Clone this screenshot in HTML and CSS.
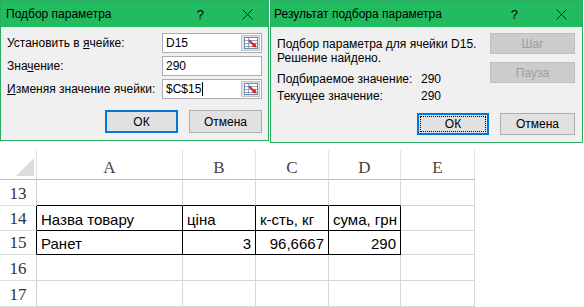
FILE: index.html
```html
<!DOCTYPE html>
<html lang="ru">
<head>
  <meta charset="UTF-8">
  <meta name="viewport" content="width=device-width, initial-scale=1.0">
  <title>Подбор параметра</title>
  <link rel="stylesheet" href="styles.css">
</head>
<body>
  <div class="dialogs">
    <div class="dialog goal">
      <div class="titlebar">
        <span class="title">Подбор параметра</span>
        <span class="help">?</span>
        <svg class="close" width="11" height="11" viewBox="0 0 11 11"><path d="M0.5 0.5L10.5 10.5M10.5 0.5L0.5 10.5" stroke="#222" stroke-width="1"/></svg>
      </div>
      <div class="body">
        <div class="field">
          <label>Установить в <u>я</u>чейке:</label>
          <div class="input"><span>D15</span>
            <span class="ref"><svg width="14" height="12" viewBox="0 0 14 12"><rect x="0.5" y="0.5" width="13" height="11" fill="#fff" stroke="#6d8db3"/><path d="M1 3.5h12M1 6.5h12M1 9.5h12M4.5 1v10" stroke="#8aa6c8"/><polygon points="12.5,10.5 7.7,9.6 8.8,8.4 4.3,3.9 5.7,2.5 10.2,7 11.4,5.8" fill="#d8261b"/></svg></span>
          </div>
        </div>
        <div class="field">
          <label>Зна<u>ч</u>ение:</label>
          <div class="input"><span>290</span></div>
        </div>
        <div class="field">
          <label><u>И</u>зменяя значение ячейки:</label>
          <div class="input"><span>$C$15<i class="caret"></i></span>
            <span class="ref"><svg width="14" height="12" viewBox="0 0 14 12"><rect x="0.5" y="0.5" width="13" height="11" fill="#fff" stroke="#6d8db3"/><path d="M1 3.5h12M1 6.5h12M1 9.5h12M4.5 1v10" stroke="#8aa6c8"/><polygon points="12.5,10.5 7.7,9.6 8.8,8.4 4.3,3.9 5.7,2.5 10.2,7 11.4,5.8" fill="#d8261b"/></svg></span>
          </div>
        </div>
        <div class="buttons">
          <button class="btn default">ОК</button>
          <button class="btn">Отмена</button>
        </div>
      </div>
    </div>

    <div class="dialog result">
      <div class="titlebar">
        <span class="title">Результат подбора параметра</span>
        <span class="help">?</span>
        <svg class="close" width="11" height="11" viewBox="0 0 11 11"><path d="M0.5 0.5L10.5 10.5M10.5 0.5L0.5 10.5" stroke="#222" stroke-width="1"/></svg>
      </div>
      <div class="body">
        <div class="result-main">
          <div class="msg">
            <p>Подбор параметра для ячейки D15.</p>
            <p>Решение найдено.</p>
            <div class="values">
              <span>Подбираемое значение:</span><span>290</span>
              <span>Текущее значение:</span><span>290</span>
            </div>
          </div>
          <div class="side">
            <button class="btn off">Шаг</button>
            <button class="btn off">Пауза</button>
          </div>
        </div>
        <div class="buttons">
          <button class="btn focus">ОК</button>
          <button class="btn wide">Отмена</button>
        </div>
      </div>
    </div>
  </div>

  <div class="sheet">
    <div class="corner"><i class="tri"></i></div>
    <div class="col-head">A</div>
    <div class="col-head">B</div>
    <div class="col-head">C</div>
    <div class="col-head">D</div>
    <div class="col-head">E</div>

    <div class="row-head">13</div>
    <div class="top"></div>
    <div class="top"></div>
    <div class="top"></div>
    <div class="top"></div>
    <div></div>

    <div class="row-head edge">14</div>
    <div class="box">Назва товару</div>
    <div class="box">ціна</div>
    <div class="box">к-сть, кг</div>
    <div class="box">сума, грн</div>
    <div></div>

    <div class="row-head edge">15</div>
    <div class="box">Ранет</div>
    <div class="box num">3</div>
    <div class="box num">96,6667</div>
    <div class="box num">290</div>
    <div></div>

    <div class="row-head">16</div>
    <div></div>
    <div></div>
    <div></div>
    <div></div>
    <div></div>

    <div class="row-head">17</div>
    <div></div>
    <div></div>
    <div></div>
    <div></div>
    <div></div>
  </div>
</body>
</html>
```

FILE: styles.css
```css
* {
  box-sizing: border-box;
}
body {
  margin: 0;
  background: #fff;
  color: #000;
  font-family: "Liberation Sans", Arial, sans-serif;
  font-size: 12px;
  overflow: hidden;
}
.dialogs {
  display: flex;
  align-items: flex-start;
  gap: 1px;
  height: 145px;
}
.dialog {
  border: 1px solid #2aad62;
  background: #f0f0f0;
}
.goal {
  width: 269px;
}
.result {
  width: 313px;
}
.titlebar {
  height: 26px;
  background: #22bb5f;
  display: flex;
  align-items: center;
  padding-left: 5px;
}
.result .titlebar {
  padding-left: 3px;
}
.title {
  flex: 1;
  font-size: 12px;
}
.help {
  font-size: 13px;
  margin-right: 38px;
}
.close {
  margin-right: 15px;
}
.body {
  padding: 6px 6px 7px 6px;
}
.result .body {
  padding-right: 7px;
}
.field {
  display: flex;
  justify-content: space-between;
  align-items: center;
  height: 20px;
  margin-bottom: 3px;
}
.field u {
  text-decoration: underline;
}
.input {
  width: 100px;
  height: 20px;
  border: 1px solid #abadb3;
  background: #fff;
  display: flex;
  align-items: center;
  justify-content: space-between;
  padding-left: 3px;
}
.caret {
  display: inline-block;
  width: 1px;
  height: 14px;
  margin-left: 1px;
  vertical-align: -3px;
  background: #000;
}
.ref {
  width: 19px;
  height: 16px;
  margin-right: 1px;
  background: #e1e1e1;
  border: 1px solid #c4c4c4;
  display: flex;
  align-items: center;
  justify-content: center;
}
.buttons {
  display: flex;
  justify-content: flex-end;
  gap: 11px;
  margin-top: 11px;
}
.btn {
  font-family: inherit;
  font-size: 12px;
  color: #000;
  background: #e1e1e1;
  border: 1px solid #adadad;
  width: 73px;
  height: 23px;
  padding: 0;
}
.btn.default {
  border: 2px solid #0078d7;
}
.result-main {
  display: flex;
  justify-content: space-between;
}
.msg {
  padding-top: 4px;
}
.msg p {
  margin: 0;
  line-height: 14px;
}
.values {
  margin-top: 6px;
  display: grid;
  grid-template-columns: 144px auto;
  line-height: 17px;
}
.side {
  display: flex;
  flex-direction: column;
  gap: 8px;
}
.btn.off {
  width: 85px;
  height: 21px;
  background: #cccccc;
  border-color: #bfbfbf;
  color: #9e9e9e;
}
.result .buttons {
  margin-top: 8px;
}
.btn.focus {
  width: 72px;
  height: 22px;
  border: 1px solid #0078d7;
  box-shadow: inset 0 0 0 1px #0078d7;
  outline: 1px dotted #000;
  outline-offset: -4px;
}
.btn.wide {
  width: 75px;
  height: 22px;
}

/* spreadsheet */
.sheet {
  display: grid;
  grid-template-columns: 37px 146px 73px 73px 72px 74px;
  grid-template-rows: 30px 26px 25px 24px 26px 26px;
  margin-top: 5px;
}
.sheet div {
  display: flex;
  align-items: flex-end;
  padding: 0 4px 1px;
  border-right: 1px solid #d6d6d6;
  border-bottom: 1px solid #d6d6d6;
  font-size: 15px;
  line-height: 18px;
  white-space: nowrap;
}
.sheet .corner,
.sheet .col-head {
  border-right-color: #e2e2e2;
  border-bottom-color: #bcbcbc;
}
.sheet .corner {
  justify-content: flex-end;
  padding: 0 2px 3px 0;
}
.tri {
  width: 0;
  height: 0;
  border-left: 18px solid transparent;
  border-bottom: 18px solid #dcdcdc;
}
.sheet .col-head,
.sheet .row-head {
  justify-content: center;
  font-family: "Liberation Serif", "Times New Roman", serif;
  font-size: 17px;
  line-height: 20px;
  color: #444;
}
.sheet .row-head {
  color: #333;
  border-right-color: #cfcfcf;
  border-bottom-color: #dedede;
}
.sheet .row-head.edge {
  border-right-color: #000;
}
.sheet .top {
  border-bottom-color: #000;
}
.sheet .box {
  border-right-color: #000;
  border-bottom-color: #000;
}
.sheet .num {
  justify-content: flex-end;
}
```
